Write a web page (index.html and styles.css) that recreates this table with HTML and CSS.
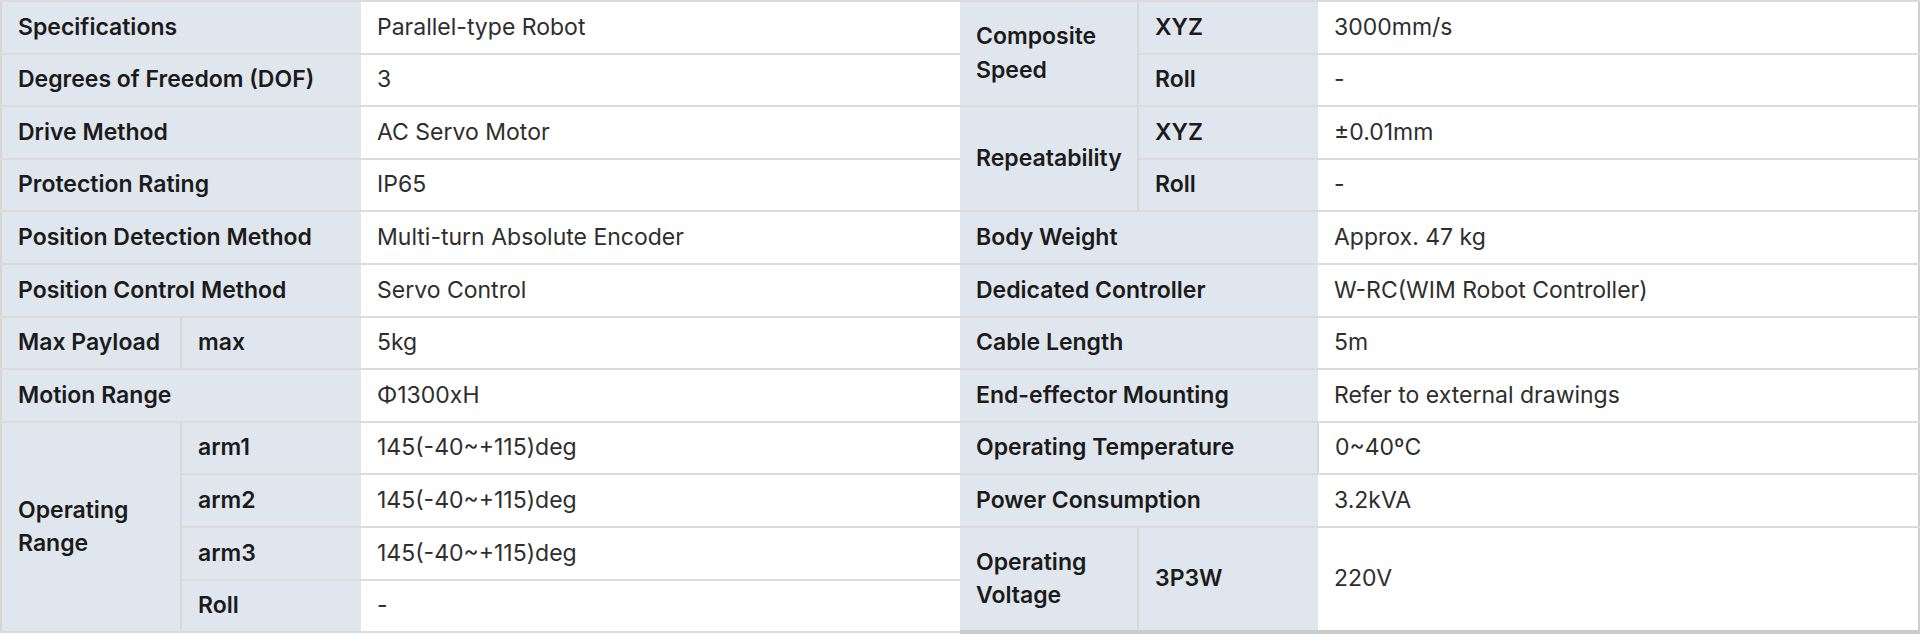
FILE: index.html
```html
<!DOCTYPE html>
<html lang="en">
<head>
<meta charset="utf-8">
<title>Specifications</title>
<link rel="stylesheet" href="styles.css">
</head>
<body>
<div class="spec-wrap">
  <table class="spec spec-left">
    <colgroup><col class="c-h1"><col class="c-h2"><col class="c-v"></colgroup>
    <tr><th colspan="2">Specifications</th><td>Parallel-type Robot</td></tr>
    <tr><th colspan="2">Degrees of Freedom (DOF)</th><td>3</td></tr>
    <tr><th colspan="2">Drive Method</th><td>AC Servo Motor</td></tr>
    <tr><th colspan="2">Protection Rating</th><td>IP65</td></tr>
    <tr><th colspan="2">Position Detection Method</th><td>Multi-turn Absolute Encoder</td></tr>
    <tr><th colspan="2">Position Control Method</th><td>Servo Control</td></tr>
    <tr><th class="grp">Max Payload</th><th>max</th><td>5kg</td></tr>
    <tr><th colspan="2">Motion Range</th><td>Φ1300xH</td></tr>
    <tr><th class="grp" rowspan="4">Operating<br>Range</th><th>arm1</th><td>145(-40~+115)deg</td></tr>
    <tr><th>arm2</th><td>145(-40~+115)deg</td></tr>
    <tr><th>arm3</th><td>145(-40~+115)deg</td></tr>
    <tr><th>Roll</th><td>-</td></tr>
  </table>
  <table class="spec spec-right">
    <colgroup><col class="c-h1"><col class="c-h2"><col class="c-v"></colgroup>
    <tr><th class="grp" rowspan="2">Composite<br>Speed</th><th>XYZ</th><td>3000mm/s</td></tr>
    <tr><th>Roll</th><td>-</td></tr>
    <tr><th class="grp" rowspan="2">Repeatability</th><th>XYZ</th><td>±0.01mm</td></tr>
    <tr><th>Roll</th><td>-</td></tr>
    <tr><th colspan="2">Body Weight</th><td>Approx. 47 kg</td></tr>
    <tr><th colspan="2">Dedicated Controller</th><td>W-RC(WIM Robot Controller)</td></tr>
    <tr><th colspan="2">Cable Length</th><td>5m</td></tr>
    <tr><th colspan="2">End-effector Mounting</th><td>Refer to external drawings</td></tr>
    <tr><th colspan="2">Operating Temperature</th><td class="sep">0~40ºC</td></tr>
    <tr><th colspan="2">Power Consumption</th><td>3.2kVA</td></tr>
    <tr class="tall"><th class="grp">Operating<br>Voltage</th><th>3P3W</th><td>220V</td></tr>
  </table>
</div>
</body>
</html>
```
FILE: styles.css
```css
html, body {
  margin: 0;
  padding: 0;
  background: #ffffff;
}
body {
  font-family: Inter, "Noto Sans", "Liberation Sans", sans-serif;
  font-size: 23px;
  line-height: 1.45;
  color: #222;
}
.spec-wrap {
  display: flex;
  width: 1920px;
  height: 634px;
}
.spec {
  width: 960px;
  border-collapse: collapse;
  table-layout: fixed;
  align-self: flex-start;
}
.c-h1 { width: 180px; }
.c-h2 { width: 180px; }
.spec-right .c-h1 { width: 178px; }
.spec-right .c-h2 { width: 180px; }
.spec tr { height: 52.6px; }
.spec tr.tall { height: 105.2px; }
.spec th, .spec td {
  padding: 0 16px;
  text-align: left;
  vertical-align: middle;
  border-top: 2px solid #dcdcdc;
  border-bottom: 2px solid #dcdcdc;
  white-space: nowrap;
}
.spec th {
  background: #e0e6ed;
  font-weight: 600;
  color: #1b1b1b;
}
.spec td {
  background: #fff;
  font-weight: 400;
  color: #2e2e2e;
}
.spec th.grp {
  border-right: 2px solid #d6d9dc;
}
.spec td.sep {
  border-left: 2px solid #d6d9dc;
}
.spec-left {
  border-left: 2px solid #d6d6d6;
}
.spec-right {
  border-right: 2px solid #d0d0d0;
}
.spec-right tr:last-child th,
.spec-right tr:last-child td {
  border-bottom: 4px solid #cbcbcb;
}
```
